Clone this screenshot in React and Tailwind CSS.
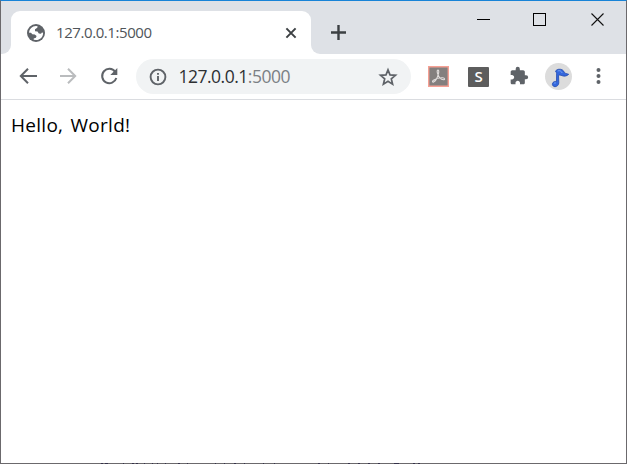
import React from 'react';

function Globe() {
  return (
    <svg width="20" height="20" viewBox="0 0 20 20">
      <circle cx="10" cy="10" r="9" fill="#5f6368" />
      <path d="M3.100 9.700C3.300 6 6.200 3.200 10 3l1.600.2-.3 1.500-2.300 1.500v2l2.500.4 1.300 1.800 2.200.3.900-1.300 1.200.3c.1 4.200-3 7.300-7.100 7.400l-2.300-.4v-1.300l2.200-.6.7-1.700-1.800-1.600-2.500-.2-1.300-1.600z" fill="#fff" />
    </svg>
  );
}

function Tab() {
  return (
    <div className="w-[300px] bg-[#dee1e6] pt-[10px]">
      <div className="flex h-[43px] items-center rounded-t-[9px] bg-white pl-[15px] pr-[13px]">
        <Globe />
        <span className="mb-[2px] ml-[10px] flex-1 whitespace-nowrap font-['Open_Sans',sans-serif] text-[15px] font-normal leading-5 tracking-[-0.42px] text-[#50555a]">
          127.0.0.1:5000
        </span>
        <svg width="14" height="14" viewBox="0 0 14 14" stroke="#3c4043" strokeWidth="2">
          <path d="M2.400 2.400l9.200 9.200M11.600 2.400l-9.200 9.200" />
        </svg>
      </div>
    </div>
  );
}

function TabStrip() {
  return (
    <div className="flex h-[53px] bg-white">
      <div className="w-[10px] rounded-br-[9px] bg-[#dee1e6]" />
      <Tab />
      <div className="flex flex-1 items-start rounded-bl-[9px] bg-[#dee1e6]">
        <svg className="ml-[19px] mt-[23px]" width="17" height="17" viewBox="0 0 17 17" stroke="#3c4043" strokeWidth="2.400">
          <path d="M8.500 1v15M1 8.500h15" />
        </svg>
        <svg className="ml-[130px] mt-[12px]" width="14" height="14" viewBox="0 0 14 14" stroke="#000" shapeRendering="crispEdges">
          <path d="M0 6.500h13" />
        </svg>
        <svg className="ml-[42px] mt-[12px]" width="14" height="14" viewBox="0 0 14 14" fill="none" stroke="#000" shapeRendering="crispEdges">
          <path d="M.5.5h12v12H.5z" />
        </svg>
        <svg className="ml-[44px] mt-[12px]" width="14" height="14" viewBox="0 0 14 14" stroke="#111" strokeWidth="1.100">
          <path d="M.5.5l12 12M12.500 .5L.5 12.500" />
        </svg>
      </div>
    </div>
  );
}

function AddressBar() {
  return (
    <div className="ml-[17px] flex h-[35px] w-[275px] items-center rounded-full bg-[#f1f3f4] pl-[13px] pr-[13px]">
      <svg width="18" height="18" viewBox="0 0 18 18" fill="none" stroke="#5f6368" strokeWidth="1.900">
        <circle cx="9" cy="9" r="7.400" />
        <path d="M9 8v5M9 5v1.800" />
      </svg>
      <span className="mb-[2px] ml-[11.500px] flex-1 whitespace-nowrap font-['Open_Sans',sans-serif] text-[17.500px] font-normal leading-6 tracking-[-0.5px] text-[#2d2f32]">
        127.0.0.1<span className="text-[#7b8085]">:5000</span>
      </span>
      <svg width="20" height="20" viewBox="0 0 20 20" fill="none" stroke="#5f6368" strokeWidth="1.700">
        <path d="M10 2.900l2 5 5.500.4-4.200 3.500 1.300 5.400L10 14.300l-4.600 2.900 1.300-5.400L2.500 8.300 8 7.900z" />
      </svg>
    </div>
  );
}

function Toolbar() {
  return (
    <div className="flex h-[46px] items-center border-b border-[#dadce0] pl-[18px]">
      <svg className="mb-[2px]" width="18" height="18" viewBox="0 0 18 18" fill="none" stroke="#5f6368" strokeWidth="2">
        <path d="M18 9H2.500M9 1.700L1.800 9 9 16.300" />
      </svg>
      <svg className="mb-[2px] ml-[22px]" width="18" height="18" viewBox="0 0 18 18" fill="none" stroke="#babcbe" strokeWidth="2">
        <path d="M1 9h14.500M9 1.700L16.200 9 9 16.300" />
      </svg>
      <svg className="mb-[2px] ml-[22px]" width="20" height="20" viewBox="0 0 20 20" fill="none" stroke="#5f6368" strokeWidth="2">
        <path d="M16.200 5.800A7.200 7.200 0 1 0 17.300 12" />
        <path d="M18.300 2v7h-7z" fill="#5f6368" stroke="none" />
      </svg>
      <AddressBar />
      <svg className="ml-[17px]" width="21" height="21" viewBox="0 0 21 21">
        <path d="M.7.7h19.600v19.600H.7z" fill="#837f7e" stroke="#f5a094" strokeWidth="1.400" />
        <path d="M9.600 4.200c1.300-.5 1.400 1.500.8 3.700-.8 3-3 7.300-4.800 8.200-1.300.4-1.600-1-.2-1.900 2.300-1.500 6.500-2.600 9.300-2.400 2.300.2 2.400 2 .7 2-2.300-.2-4.700-2.900-5.600-5.600-.5-1.500-1-3.600-.2-4z" fill="none" stroke="#e1dddc" strokeWidth="1.100" />
      </svg>
      <div className="ml-[19px] flex h-[20px] w-[21px] items-center justify-center rounded-[1px] bg-[#5d5d5d] font-['Open_Sans',sans-serif] text-[15px] font-semibold leading-none text-white">
        S
      </div>
      <svg className="ml-[20px] mb-[1px]" width="20" height="20" viewBox="0 0 24 24" fill="#5f6368">
        <path d="M20.500 11H19V7c0-1.100-.9-2-2-2h-4V3.500a2.500 2.500 0 0 0-5 0V5H4c-1.100 0-1.990.9-1.990 2v3.800H3.500c1.490 0 2.700 1.210 2.700 2.700s-1.210 2.700-2.700 2.700H2V20c0 1.100.9 2 2 2h3.800v-1.500c0-1.490 1.210-2.700 2.700-2.700s2.700 1.210 2.700 2.700V22H17c1.100 0 2-.9 2-2v-4h1.500a2.500 2.500 0 0 0 0-5z" />
      </svg>
      <div className="ml-[16px] flex h-[27px] w-[27px] items-center justify-center rounded-full bg-[#dcdcdc]">
        <svg width="27" height="27" viewBox="0 0 27 27">
          <path d="M10.500 8c1.500-2 4.800-2.300 7-1 1.600 1 1.400 2.700 3.200 3.400l3 .9c-1.600 1.800-4.400 2.300-6.600 1.400-1.300-.6-2.900-.8-3.600-.4l.3 7.300c.1 2.400-1.900 4.200-3.800 4.100-2.900-.1-3.400-3.300-1.500-4.600 1-.8 2.200-.8 3-.4l.1-8c0-.9-.4-1.700-1.100-2.700z" fill="#3467dd" stroke="#2149ad" strokeWidth=".8" />
          <path d="M12.600 8c2-.9 3.700 0 4.600 2M8.900 20.500c.4-.6 1.300-.8 2-.5" fill="none" stroke="#79a7f5" strokeWidth=".9" />
        </svg>
      </div>
      <svg className="ml-[24px] mb-[1px]" width="5" height="18" viewBox="0 0 5 18" fill="#5f6368">
        <circle cx="2.500" cy="3" r="2" />
        <circle cx="2.500" cy="9" r="2" />
        <circle cx="2.500" cy="15" r="2" />
      </svg>
    </div>
  );
}

/* Dark flecks of the desktop showing through the window's bottom edge. */
function BottomEdge() {
  return (
    <svg className="-mx-px block shrink-0" width="627" height="1" viewBox="0 0 627 1" shapeRendering="crispEdges">
      <path d="M0 0h627v1H0z" fill="#6b696c" />
      <path
        d="M101 .5h2m2 0h3m15 0h1m8 0h2m2 0h2m6 0h1m7 0h1m4 0h1m7 0h1m12 0h2m7 0h1m27 0h1m8 0h1m9 0h2m8 0h1m18 0h1m10 0h1m43 0h2m8 0h1m19 0h2m8 0h2m8 0h2m8 0h2m14 0h5m14 0h2m3 0h2"
        stroke="#343149"
      />
    </svg>
  );
}

export default function App() {
  return (
    <div className="flex h-[464px] w-[627px] flex-col overflow-hidden border border-b-0 border-[#6b696c] border-t-[#1883d7] bg-white">
      <TabStrip />
      <Toolbar />
      <main className="flex-1 pl-[10px] pt-[12px] font-['Open_Sans',sans-serif] text-[19px] font-normal leading-[26px] tracking-[0.28px] text-black [word-spacing:2px]">
        Hello, World!
      </main>
      <BottomEdge />
    </div>
  );
}
